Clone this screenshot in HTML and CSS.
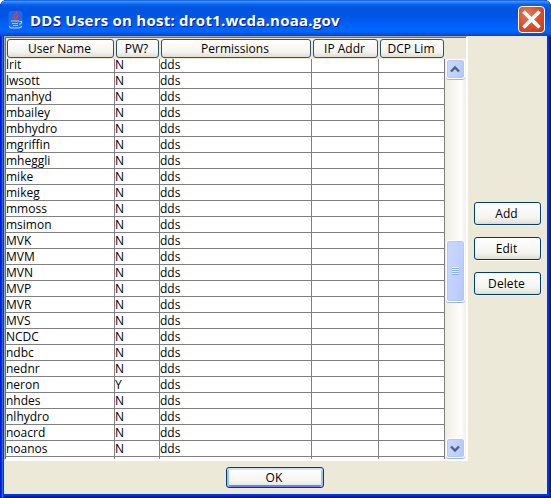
FILE: index.html
```html
<!DOCTYPE html>
<html lang="en">
<head>
<meta charset="utf-8">
<title>DDS Users on host: drot1.wcda.noaa.gov</title>
<link rel="stylesheet" href="styles.css">
</head>
<body>
<div class="window">
  <header class="titlebar">
    <svg class="java" width="16" height="20" viewBox="0 0 16 20">
      <rect x=".5" y="1" width="14" height="18" rx="3" fill="#4a84dc" opacity=".45"/>
      <path d="M8.500 1v2.500L6 6v1.500L8 10M10 5L8.500 7v2" fill="none" stroke="#e23a50" stroke-width="1.500"/>
      <path d="M3 11h8M4 13.500h6M5 15.500h5M11.500 11.500h2v1.500l-2 1.500M1 16.500l2 1.500h8l3-1.500" fill="none" stroke="#b4cdf3" stroke-width="1.200"/>
    </svg>
    <h1 class="title">DDS Users on host: drot1.wcda.noaa.gov</h1>
    <button class="close" aria-label="Close"><svg width="25" height="25" viewBox="0 0 25 25"><path d="M4.500 4.500l16 16M20.500 4.500l-16 16" stroke="#fff" stroke-width="3.800"/></svg></button>
  </header>
  <main class="client">
    <div class="middle">
      <section class="pane">
        <div class="heads cols">
          <div class="head">User Name</div><div class="head">PW?</div><div class="head">Permissions</div><div class="head">IP Addr</div><div class="head">DCP Lim</div>
        </div>
        <div class="view">
          <div class="rows" id="rows"></div>
          <div class="scroll">
            <div class="arrow"><svg width="18" height="19" viewBox="0 0 18 19"><path d="M5 11.500l4-4 4 4" fill="none" stroke="#4d6185" stroke-width="2.400"/></svg></div>
            <div class="thumb"><i class="grip"></i></div>
            <div class="arrow down"><svg width="18" height="19" viewBox="0 0 18 19"><path d="M5 7.500l4 4 4-4" fill="none" stroke="#4d6185" stroke-width="2.400"/></svg></div>
          </div>
        </div>
      </section>
      <aside class="side">
        <button class="btn">Add</button>
        <button class="btn">Edit</button>
        <button class="btn">Delete</button>
      </aside>
    </div>
    <footer class="foot"><button class="btn ok">OK</button></footer>
  </main>
</div>
<script src="rows.js"></script>
</body>
</html>
```
FILE: styles.css
```css
* { box-sizing: border-box; }
body { margin: 0; background: #fff; font: 12px/16px "Open Sans", "Noto Sans", sans-serif; color: #000; overflow: hidden; }
button { font: inherit; color: inherit; padding: 0; }
.window {
  width: 551px; height: 498px; padding: 0 4px 4px; border-radius: 7px 7px 0 0;
  background: #0036e0; overflow: hidden;
  box-shadow: inset 1px 0 #0019cf, inset 2px 0 #0831d9, inset 3px 0 #166aee, inset -1px 0 #001590, inset -2px 0 #001ca8, inset 0 -1px #001590, inset 0 -2px #001eb0;
}
.titlebar {
  height: 36px; margin: 0 -4px; padding: 0 6px 0 8px; display: flex; align-items: center;
  background: linear-gradient(#0a56d8 0, #3c94ff 4%, #2a80f8 7%, #0862ea 13%, #0054e1 22%, #0055e4 45%, #0060f8 68%, #0066ff 86%, #0058e8 93%, #0042cc 100%);
}
.java { flex: none; margin-top: 3px; }
.title {
  margin: 3px 0 0 6px; flex: 1; font: bold 15px/20px "Open Sans", sans-serif; letter-spacing: .24px;
  color: #fff; text-shadow: 1px 1px #0a1883; white-space: nowrap;
}
.close {
  width: 27px; height: 27px; margin-top: 3px; border: 1px solid #fff; border-radius: 4px;
  background: radial-gradient(circle at 35% 30%, #e87858, #dc4a26 55%, #c83a12);
  display: grid; place-items: center;
}
.client { height: 458px; background: #ece9d8; display: flex; flex-direction: column; }
.middle { height: 425px; display: flex; }
.pane {
  width: 464px; border: solid; border-width: 1px 2px 2px 1px; border-color: #aca899 #fff #fff #aca899;
  padding: 1px 0 0 1px; box-shadow: inset 1px 1px #716f64; background: #ece9d8;
}
.cols { display: grid; grid-template-columns: 109px 45px 152px 67px 66px; }
.heads { height: 21px; padding-top: 1px; }
.head {
  height: 19px; margin: 0 1px; padding-right: 2px; border: 1px solid #2b5578; border-radius: 3px; text-align: center; line-height: 17px;
  background: linear-gradient(#fff, #f5f4ef 70%, #dfdcd0); white-space: nowrap;
}
.view { height: 400px; display: flex; overflow: hidden; }
.rows { width: 439px; height: 400px; background: #fff; overflow: hidden; }
.row { height: 16px; }
.row:first-child { height: 14px; }
.row:first-child .cell { height: 14px; line-height: 12px; }
.cell { height: 16px; border: solid #808080; border-width: 0 1px 1px 0; line-height: 16px; white-space: nowrap; }
.scroll {
  width: 21px; padding: 0 1px; display: flex; flex-direction: column;
  background: linear-gradient(90deg, #eeede5, #fefefb 75%, #f3f1ec);
}
.arrow, .thumb {
  width: 19px; border: 1px solid #fff; border-radius: 3px; flex: none;
  background: linear-gradient(100deg, #c9d8fe, #c0d0fd 60%, #b2c6f7);
  box-shadow: inset 0 0 0 1px #b5c8f5, 0 1px #9fb7e4;
}
.arrow { height: 20px; }
.arrow svg { display: block; margin-left: -1px; }
.down { margin: auto 0 1px; }
.thumb { height: 62px; margin-top: 161px; display: grid; place-items: center; }
.grip { width: 7px; height: 8px; background: repeating-linear-gradient(#eef4fe 0 1px, #8cb0f8 1px 2px); }
.side { flex: 1; padding: 166px 0 0 6px; display: flex; flex-direction: column; gap: 12px; }
.btn {
  width: 67px; height: 23px; padding-right: 2px; border: 1px solid #003c74; border-radius: 3px; line-height: 20px; letter-spacing: .1px;
  background: linear-gradient(#fff, #f4f4f0 70%, #e9e8df 90%, #dcd8cc);
  box-shadow: 0 1px #f8f7f0, 1px 0 #f5f3eb;
}
.foot { height: 33px; padding: 6px 0 0 222px; }
.ok { display: block; width: 98px; height: 21px; line-height: 17px; box-shadow: inset 0 2px #cee0fc, inset 2px 0 #a6c0f0, inset -2px 0 #a6c0f0, inset 0 -2px #6982ee; }
```
FILE: rows.js
```js
const users = ["lrit", "lwsott", "manhyd", "mbailey", "mbhydro", "mgriffin", "mheggli", "mike", "mikeg", "mmoss", "msimon", "MVK", "MVM", "MVN", "MVP", "MVR", "MVS", "NCDC", "ndbc", "nednr", "neron", "nhdes", "nlhydro", "noacrd", "noanos", ""];
document.getElementById("rows").innerHTML = users.map(name => {
  const cells = name ? [name, name === "neron" ? "Y" : "N", "dds", "", ""] : ["", "", "", "", ""];
  return `<div class="row cols">${cells.map(c => `<div class="cell">${c}</div>`).join("")}</div>`;
}).join("");
```
